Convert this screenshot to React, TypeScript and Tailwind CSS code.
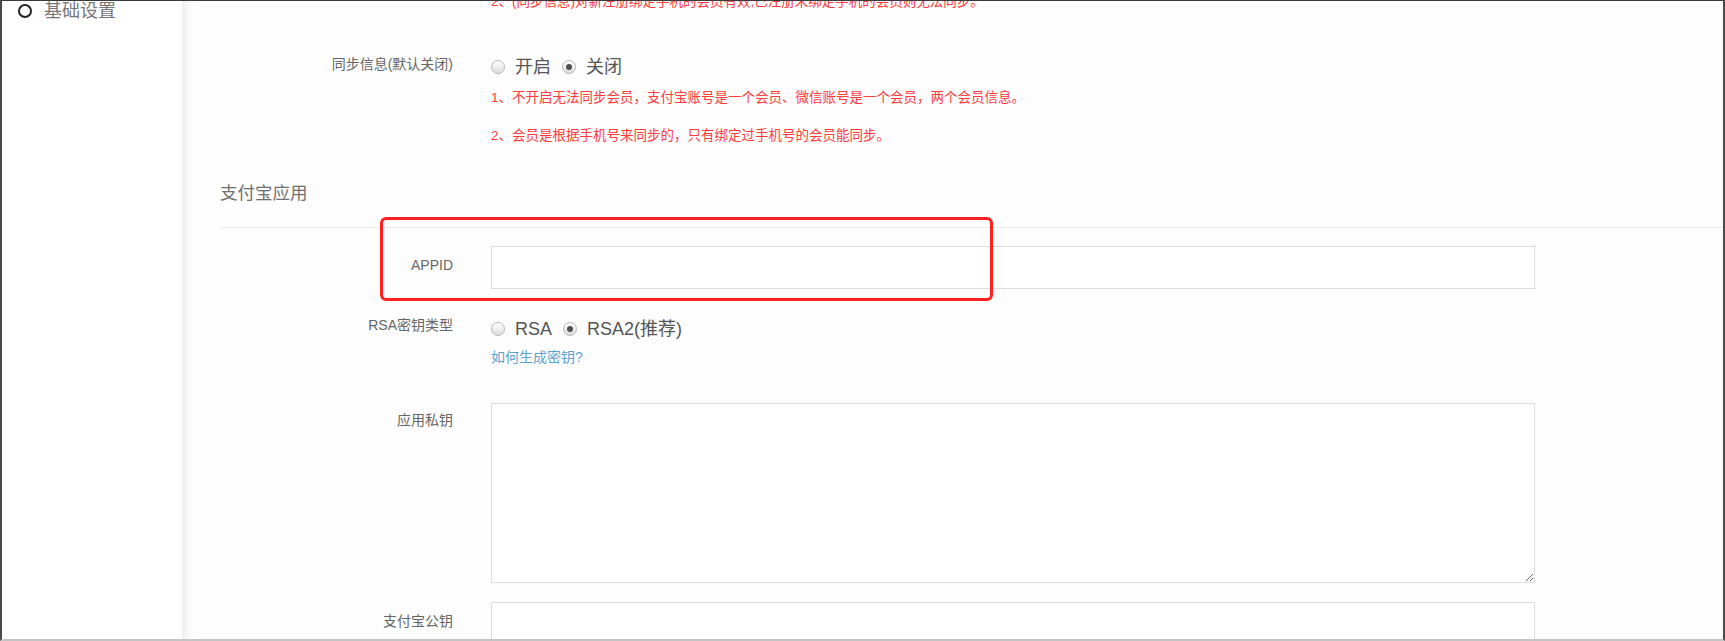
import React from "react";

const FONT = { fontFamily: '"Liberation Sans", "Noto Sans CJK SC", sans-serif' };

function Radio({ checked }: { checked?: boolean }) {
  return (
    <span className="flex h-[14px] w-[14px] items-center justify-center rounded-full border border-[#b9b9b9] bg-gradient-to-b from-[#ffffff] to-[#dcdcdc]">
      {checked ? <span className="h-[6px] w-[6px] rounded-full bg-[#505050]" /> : null}
    </span>
  );
}

function RadioGroup({ items, checkedIndex }: { items: string[]; checkedIndex: number }) {
  return (
    <div className="flex h-[24px] items-center text-[18px] leading-[24px] text-[#555]">
      {items.map((t, i) => (
        <div key={t} className={`flex items-center ${i > 0 ? "ml-[11px]" : ""}`}>
          <Radio checked={i === checkedIndex} />
          <span className="ml-[10px]">{t}</span>
        </div>
      ))}
    </div>
  );
}

export default function App() {
  return (
    <div
      style={FONT}
      className="flex h-[641px] w-[1725px] overflow-hidden border-t border-l-2 border-r-2 border-b-2 border-t-[#3a3a3a] border-l-[#4a4a4a] border-r-[#4a4a4a] border-b-[#c4c4c4] bg-white"
    >
      {/* sidebar */}
      <aside className="w-[180px] shrink-0 bg-white">
        <div className="mt-[-2px] flex h-[24px] items-center pl-[16px]">
          <span className="h-[14px] w-[14px] rounded-full border-[2.5px] border-[#222]" />
          <span className="ml-[12px] text-[18px] leading-[24px] text-[#777]">基础设置</span>
        </div>
      </aside>

      {/* main */}
      <main className="relative flex-1 overflow-hidden bg-[#fdfdfd] pl-[38px] shadow-[inset_10px_0_10px_-6px_rgba(0,0,0,0.07)]">
        {/* clipped note */}
        <div className="mt-[-9px] flex h-[20px]">
          <div className="w-[233px] shrink-0" />
          <div className="pl-[38px] text-[13.5px] leading-[20px] text-[#ff3b3b]">
            2、(同步信息)对新注册绑定手机的会员有效,已注册未绑定手机的会员则无法同步。
          </div>
        </div>

        {/* sync row */}
        <div className="mt-[42px] flex items-start">
          <div className="w-[233px] shrink-0 text-right text-[14px] leading-[20px] text-[#666]">同步信息(默认关闭)</div>
          <div className="flex flex-col pl-[38px] pt-[1px]">
            <RadioGroup items={["开启", "关闭"]} checkedIndex={1} />
            <div className="mt-[9px] text-[13.5px] leading-[20px] text-[#ff3b3b]">
              1、不开启无法同步会员，支付宝账号是一个会员、微信账号是一个会员，两个会员信息。
            </div>
            <div className="mt-[18px] text-[13.5px] leading-[20px] text-[#ff3b3b]">
              2、会员是根据手机号来同步的，只有绑定过手机号的会员能同步。
            </div>
          </div>
        </div>

        {/* heading */}
        <div className="mt-[35px] h-[24px] text-[17.5px] leading-[24px] text-[#707070]">支付宝应用</div>
        <div className="mt-[22px] h-px bg-[#ececec]" />

        {/* APPID */}
        <div className="mt-[18px] flex items-start">
          <div className="w-[233px] shrink-0 pt-[9px] text-right text-[14px] leading-[20px] text-[#666]">APPID</div>
          <div className="pl-[38px]">
            <input className="h-[43px] w-[1044px] border border-[#dcdcdc] bg-white px-[10px] outline-none" />
          </div>
        </div>

        {/* RSA */}
        <div className="mt-[26px] flex items-start">
          <div className="w-[233px] shrink-0 text-right text-[14px] leading-[20px] text-[#666]">RSA密钥类型</div>
          <div className="flex flex-col pl-[38px] pt-[2px]">
            <RadioGroup items={["RSA", "RSA2(推荐)"]} checkedIndex={1} />
            <div className="mt-[6px] text-[14px] leading-[20px] text-[#5fa2d0]">如何生成密钥?</div>
          </div>
        </div>

        {/* private key */}
        <div className="mt-[36px] flex items-start">
          <div className="w-[233px] shrink-0 pt-[7px] text-right text-[14px] leading-[20px] text-[#666]">应用私钥</div>
          <div className="pl-[38px]">
            <textarea className="block h-[180px] w-[1044px] border border-[#dcdcdc] bg-white p-[8px] outline-none" />
          </div>
        </div>

        {/* public key */}
        <div className="mt-[19px] flex items-start">
          <div className="w-[233px] shrink-0 pt-[9px] text-right text-[14px] leading-[20px] text-[#666]">支付宝公钥</div>
          <div className="pl-[38px]">
            <input className="h-[43px] w-[1044px] border border-[#dcdcdc] bg-white px-[10px] outline-none" />
          </div>
        </div>

        {/* annotation box */}
        <div className="pointer-events-none absolute left-[198px] top-[216px] h-[84px] w-[613px] rounded-[6px] border-[3px] border-[#ff2020]" />
      </main>
    </div>
  );
}
